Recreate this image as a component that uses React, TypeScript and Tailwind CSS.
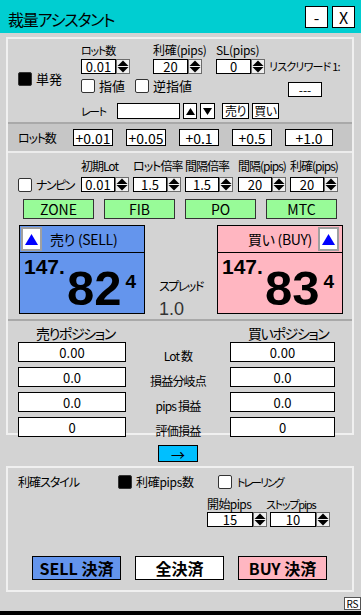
import React from 'react';

// small spin control (up / down arrows)
const Spin: React.FC = () => (
  <svg width="14" height="15" viewBox="0 0 14 15" className="block shrink-0">
    <rect x="0.5" y="0.5" width="13" height="14" fill="#f0f0f0" stroke="#6b6b6b" />
    <path d="M7 1.5L12.5 7H1.5Z" fill="#000" />
    <path d="M1.5 8H12.5L7 13.5Z" fill="#000" />
  </svg>
);

const NumBox: React.FC<{ value: string; w: string }> = ({ value, w }) => (
  <div className={`${w} h-[15px] bg-white border border-black flex items-center justify-center text-[13px] leading-none`}>
    {value}
  </div>
);

const Check: React.FC<{ on?: boolean }> = ({ on }) => (
  <span className={`block w-[14px] h-[14px] shrink-0 rounded-[2px] border border-[#333] ${on ? 'bg-black' : 'bg-white'}`} />
);

const BlueUp: React.FC = () => (
  <div className="w-[21px] h-[24px] bg-white border-2 border-[#a0a0a0] flex items-center justify-center">
    <svg width="13" height="11" viewBox="0 0 13 11">
      <path d="M6.5 0L13 11H0Z" fill="#0000ff" />
    </svg>
  </div>
);

const PricePanel: React.FC<{ side: 'sell' | 'buy' }> = ({ side }) => {
  const sell = side === 'sell';
  return (
    <div className={`w-[126px] h-[89px] border border-black ${sell ? 'bg-[#6495ed]' : 'bg-[#ffb6c1]'}`}>
      <div className={`h-[27px] border-b border-black flex items-center ${sell ? '' : 'justify-end'}`}>
        {sell ? (
          <>
            <div className="ml-[1px]"><BlueUp /></div>
            <span className="ml-[8px] text-[14px] tracking-[-0.3px] leading-none">売り (SELL)</span>
          </>
        ) : (
          <>
            <span className="mr-[6px] text-[14px] tracking-[-0.3px] leading-none">買い (BUY)</span>
            <div className="mr-[3px]"><BlueUp /></div>
          </>
        )}
      </div>
      <div className="pl-[4px] pt-[5px] font-['Liberation_Sans',Arial,sans-serif] font-bold">
        <div className="text-[21px] leading-[18px]">147.</div>
        <div className="flex justify-end items-start pr-[8px]">
          <span className="text-[49px] leading-[24px]">{sell ? '82' : '83'}</span>
          <span className="text-[19px] leading-[18px] ml-[4px] -mt-[3px]">4</span>
        </div>
      </div>
    </div>
  );
};

const PosRow: React.FC<{ value: string; label: string }> = ({ value, label }) => (
  <div className="flex">
    <div className="w-[108px] h-[20px] bg-white border border-black flex items-center justify-center text-[13px] leading-none">{value}</div>
    <div className="w-[104px] text-center text-[12px] tracking-[-0.8px] leading-[14px] pt-[7px] whitespace-nowrap">{label}</div>
    <div className="w-[105px] h-[20px] bg-white border border-black flex items-center justify-center text-[13px] leading-none">{value}</div>
  </div>
);

export default function App() {
  const nanpin = [
    { label: '初期Lot', value: '0.01', w: 'w-[52px]' },
    { label: 'ロット倍率', value: '1.5', w: 'w-[52px]' },
    { label: '間隔倍率', value: '1.5', w: 'w-[53px]' },
    { label: '間隔(pips)', value: '20', w: 'w-[52px]' },
    { label: '利確(pips)', value: '20', w: 'w-[52px]' },
  ];

  return (
    <div className="w-[361px] h-[615px] bg-black overflow-hidden font-['Noto_Sans_CJK_JP','Noto_Sans',sans-serif] [font-feature-settings:'palt'] text-black">
      <div className="w-[361px] h-[611px] bg-[#d3d3d3] flex flex-col">
        {/* Title bar */}
        <div className="h-[33px] shrink-0 bg-[#00ced1] flex items-center pl-[8px] pr-[6px]">
          <span className="flex-1 text-[16px] tracking-[-1.2px] leading-none pt-[5px]">裁量アシスタント</span>
          <div className="w-[23px] h-[22px] bg-white border border-black flex items-center justify-center text-[16px] leading-none">-</div>
          <div className="ml-[4px] w-[23px] h-[22px] bg-white border border-black flex items-center justify-center text-[16px] leading-none">X</div>
        </div>

        {/* Main frame */}
        <div className="mt-[4px] ml-[6px] w-[348px] border-2 border-[#f0f0f0] flex flex-col">
          {/* Single order */}
          <div className="h-[83px] flex">
            <div className="w-[73px] flex items-center pl-[10px] gap-[4px] pb-[4px]">
              <Check on />
              <span className="text-[13px] leading-none">単発</span>
            </div>
            <div className="flex flex-col pt-[4px]">
              <div className="flex">
                <div className="w-[72px] flex flex-col">
                  <span className="text-[11px] tracking-[-1.2px] leading-[14px] whitespace-nowrap">ロット数</span>
                  <div className="mt-[2px] flex"><NumBox value="0.01" w="w-[35px]" /><Spin /></div>
                </div>
                <div className="w-[63px] flex flex-col">
                  <span className="text-[12px] tracking-[-0.3px] leading-[14px] whitespace-nowrap">利確(pips)</span>
                  <div className="mt-[2px] flex"><NumBox value="20" w="w-[35px]" /><Spin /></div>
                </div>
                <div className="w-[53px] flex flex-col">
                  <span className="text-[12px] tracking-[-0.3px] leading-[14px] whitespace-nowrap">SL(pips)</span>
                  <div className="mt-[2px] flex"><NumBox value="0" w="w-[35px]" /><Spin /></div>
                </div>
                <div className="flex flex-col">
                  <div className="h-[16px]" />
                  <span className="text-[11px] tracking-[-0.8px] leading-[15px] whitespace-nowrap">リスクリワード 1:</span>
                </div>
              </div>
              <div className="mt-[5px] h-[18px] flex">
                <div className="w-[54px] flex items-start gap-[4px]">
                  <Check />
                  <span className="text-[13px] leading-[14px]">指値</span>
                </div>
                <div className="w-[153px] flex items-start gap-[4px]">
                  <Check />
                  <span className="text-[13px] leading-[14px]">逆指値</span>
                </div>
                <div className="mt-[3px] w-[34px] h-[15px] bg-white border border-black flex items-center justify-center text-[12px] leading-none">---</div>
              </div>
              <div className="mt-[6px] h-[16px] flex items-center">
                <span className="w-[36px] text-[11px] tracking-[-1.5px] leading-none whitespace-nowrap">レート</span>
                <div className="w-[63px] h-[16px] bg-white border border-black" />
                <div className="ml-[3px] w-[14px] h-[16px] bg-white border border-black flex items-center justify-center">
                  <svg width="9" height="7" viewBox="0 0 9 7"><path d="M4.5 0L9 7H0Z" fill="#000" /></svg>
                </div>
                <div className="ml-[3px] w-[15px] h-[16px] bg-white border border-black flex items-center justify-center">
                  <svg width="9" height="7" viewBox="0 0 9 7"><path d="M0 0H9L4.5 7Z" fill="#000" /></svg>
                </div>
                <div className="ml-[7px] w-[27px] h-[16px] bg-white border border-black flex items-center justify-center text-[12px] tracking-[-0.5px] leading-none">売り</div>
                <div className="ml-[3px] w-[27px] h-[16px] bg-white border border-black flex items-center justify-center text-[12px] tracking-[-0.5px] leading-none">買い</div>
              </div>
            </div>
          </div>

          {/* Lot increments */}
          <div className="h-[31px] border-t-2 border-b-2 border-t-[#a9a9a9] border-b-[#ececec] bg-[#c6c6c6] flex items-center pl-[10px]">
            <span className="w-[55px] text-[12px] tracking-[-1.2px] leading-none whitespace-nowrap">ロット数</span>
            <div className="flex gap-[13px]">
              {['+0.01', '+0.05', '+0.1', '+0.5'].map((v) => (
                <div key={v} className="w-[40px] h-[17px] bg-white border border-black flex items-center justify-center text-[14px] leading-none">{v}</div>
              ))}
              <div className="w-[48px] h-[17px] bg-white border border-black flex items-center justify-center text-[14px] leading-none">+1.0</div>
            </div>
          </div>

          {/* Nanpin */}
          <div className="h-[69px] pt-[6px] flex flex-col">
            <div className="flex">
              <div className="w-[73px] flex items-end pl-[10px] gap-[4px]">
                <Check />
                <span className="text-[12px] tracking-[-1.5px] leading-[15px] whitespace-nowrap">ナンピン</span>
              </div>
              {nanpin.map((n) => (
                <div key={n.label} className={`${n.w} flex flex-col`}>
                  <span className="text-[12px] tracking-[-1px] leading-[14px] whitespace-nowrap">{n.label}</span>
                  <div className="mt-[4px] flex"><NumBox value={n.value} w="w-[34px]" /><Spin /></div>
                </div>
              ))}
            </div>
            <div className="mt-[7px] flex pl-[15px] gap-[10px]">
              {['ZONE', 'FIB', 'PO', 'MTC'].map((b) => (
                <div key={b} className="w-[71px] h-[20px] bg-[#98fb98] border border-[#333] flex items-center justify-center text-[14px] leading-none">{b}</div>
              ))}
            </div>
          </div>

          {/* Prices */}
          <div className="h-[97px] pt-[3px] pl-[11px] flex">
            <PricePanel side="sell" />
            <div className="w-[72px] pl-[14px] pt-[53px] flex flex-col">
              <span className="text-[12px] tracking-[-1.5px] leading-[16px] whitespace-nowrap">スプレッド</span>
              <span className="mt-[5px] text-[18px] leading-[20px] text-[#333] font-['Liberation_Sans',Arial,sans-serif]">1.0</span>
            </div>
            <PricePanel side="buy" />
          </div>

          {/* Positions */}
          <div className="h-[114px] border-t-2 border-[#a9a9a9] pt-[4px] pl-[10px] flex flex-col">
            <div className="flex h-[17px]">
              <span className="w-[212px] pl-[18px] text-[14px] tracking-[-1.4px] leading-[17px] whitespace-nowrap">売りポジション</span>
              <span className="pl-[18px] text-[14px] tracking-[-1.4px] leading-[17px] whitespace-nowrap">買いポジション</span>
            </div>
            <div className="flex flex-col gap-[4px]">
              <PosRow value="0.00" label="Lot 数" />
              <PosRow value="0.0" label="損益分岐点" />
              <PosRow value="0.0" label="pips 損益" />
              <PosRow value="0" label="評価損益" />
            </div>
          </div>
        </div>

        {/* Arrow */}
        <div className="mt-[10px] pl-[158px]">
          <div className="w-[40px] h-[17px] bg-[#00bfff] border border-black flex items-center justify-center text-[14px] leading-none">→</div>
        </div>

        {/* Take-profit style */}
        <div className="mt-[4px] ml-[6px] w-[348px] h-[126px] border-2 border-[#f0f0f0] pl-[10px] pt-[7px] flex flex-col">
          <div className="flex items-center h-[14px]">
            <span className="w-[100px] text-[12px] tracking-[-1px] leading-[14px] whitespace-nowrap">利確スタイル</span>
            <Check on />
            <span className="ml-[4px] w-[82px] text-[12px] tracking-[-0.3px] leading-[14px] whitespace-nowrap">利確pips数</span>
            <Check />
            <span className="ml-[5px] text-[11px] tracking-[-2px] leading-[14px] whitespace-nowrap">トレーリング</span>
          </div>
          <div className="mt-[9px] pl-[189px] flex">
            <div className="w-[63px] flex flex-col">
              <span className="text-[12px] tracking-[-0.6px] leading-[12px] whitespace-nowrap">開始pips</span>
              <div className="mt-[2px] flex"><NumBox value="15" w="w-[46px]" /><Spin /></div>
            </div>
            <div className="flex flex-col">
              <span className="-ml-[4px] text-[11px] tracking-[-1.2px] leading-[12px] whitespace-nowrap">ストップpips</span>
              <div className="mt-[2px] flex"><NumBox value="10" w="w-[46px]" /><Spin /></div>
            </div>
          </div>
          <div className="mt-[29px] pl-[14px] flex gap-[14px]">
            <div className="w-[89px] h-[24px] bg-[#6495ed] border border-black flex items-center justify-center text-[16px] font-bold leading-none">SELL 決済</div>
            <div className="w-[89px] h-[24px] bg-white border border-black flex items-center justify-center text-[16px] font-bold leading-none">全決済</div>
            <div className="w-[89px] h-[24px] bg-[#ffb6c1] border border-black flex items-center justify-center text-[16px] font-bold leading-none">BUY 決済</div>
          </div>
        </div>

        <div className="mt-auto mb-[1px] self-end w-[17px] h-[13px] bg-white border border-[#555] flex items-center justify-center text-[10px] leading-none">RS</div>
      </div>
    </div>
  );
}
